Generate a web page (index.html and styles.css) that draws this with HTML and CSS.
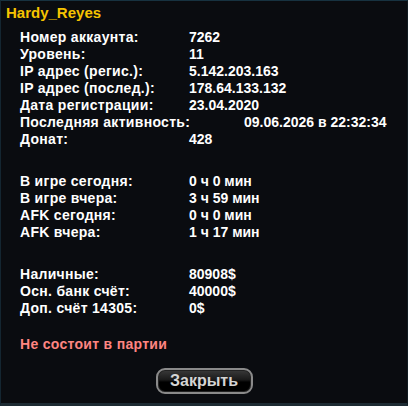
FILE: index.html
```html
<!DOCTYPE html>
<html>
<head>
<meta charset="utf-8">
<link rel="stylesheet" href="styles.css">
</head>
<body>
<div class="dialog">
  <div class="title">Hardy_Reyes</div>
  <div class="rows">
    <div class="row"><span class="label">Номер аккаунта:</span><span class="val">7262</span></div>
    <div class="row"><span class="label">Уровень:</span><span class="val">11</span></div>
    <div class="row"><span class="label">IP адрес (регис.):</span><span class="val">5.142.203.163</span></div>
    <div class="row"><span class="label">IP адрес (послед.):</span><span class="val">178.64.133.132</span></div>
    <div class="row"><span class="label">Дата регистрации:</span><span class="val">23.04.2020</span></div>
    <div class="row"><span class="label">Последняя активность:</span><span class="val far">09.06.2026 в 22:32:34</span></div>
    <div class="row"><span class="label">Донат:</span><span class="val">428</span></div>
  </div>
  <div class="rows group">
    <div class="row"><span class="label">В игре сегодня:</span><span class="val">0 ч 0 мин</span></div>
    <div class="row"><span class="label">В игре вчера:</span><span class="val">3 ч 59 мин</span></div>
    <div class="row"><span class="label">AFK сегодня:</span><span class="val">0 ч 0 мин</span></div>
    <div class="row"><span class="label">AFK вчера:</span><span class="val">1 ч 17 мин</span></div>
  </div>
  <div class="rows group">
    <div class="row"><span class="label">Наличные:</span><span class="val">80908$</span></div>
    <div class="row"><span class="label">Осн. банк счёт:</span><span class="val">40000$</span></div>
    <div class="row"><span class="label">Доп. счёт 14305:</span><span class="val">0$</span></div>
  </div>
  <div class="party">Не состоит в партии</div>
  <div class="actions"><button class="btn">Закрыть</button></div>
</div>
</body>
</html>
```
FILE: styles.css
```css
html, body {
  margin: 0;
  padding: 0;
  background: #0a0c10;
}
.dialog {
  box-sizing: border-box;
  width: 408px;
  height: 406px;
  background: #0a0c10;
  border-top: 1px solid #173240;
  border-left: 1px solid #142631;
  border-right: 1px solid #0f1a20;
  border-bottom: 3px solid #1d2b33;
  font-family: "Liberation Sans", Arial, sans-serif;
  font-weight: bold;
  color: #ffffff;
  font-size: 14px;
}
.title {
  color: #f6c400;
  font-size: 15px;
  padding: 3px 0 0 5px;
  height: 25px;
  line-height: 17px;
}
.rows {
  padding-left: 19px;
}
.row {
  display: grid;
  grid-template-columns: 169px auto;
  line-height: 17px;
  height: 17px;
  white-space: nowrap;
}
.label {
  letter-spacing: 0.3px;
  white-space: nowrap;
}
.val.far {
  padding-left: 55px;
}
.group {
  margin-top: 25px;
}
.party {
  color: #ff8581;
  padding-left: 19px;
  margin-top: 19px;
  line-height: 17px;
  letter-spacing: 0.3px;
}
.actions {
  display: flex;
  justify-content: center;
  padding-top: 15px;
}
.btn {
  font-family: "Liberation Sans", Arial, sans-serif;
  font-weight: bold;
  font-size: 16px;
  color: #d4d4d4;
  width: 97px;
  height: 26px;
  border-radius: 9px;
  border: 2px solid #8a8a8a;
  background: linear-gradient(#3a3a3a 0%, #1a1a1a 45%, #000 55%, #000 100%);
  box-shadow: inset 0 0 0 1px #222;
  padding: 0;
}
```
